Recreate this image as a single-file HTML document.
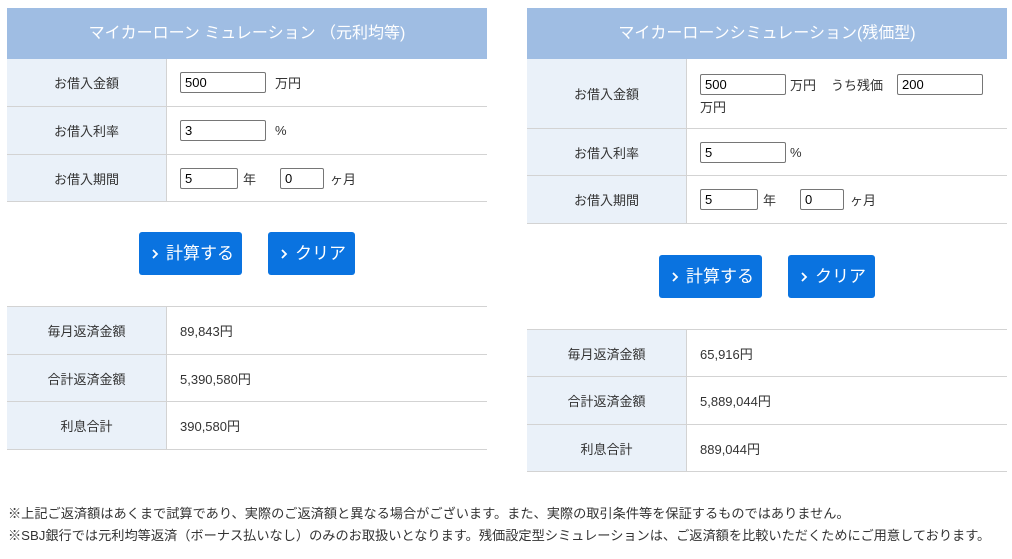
<!DOCTYPE html>
<html><head><meta charset="utf-8"><style>
*{box-sizing:border-box;margin:0;padding:0}
body{width:1012px;height:559px;background:#fff;font-family:"Liberation Sans","Noto Sans CJK JP",sans-serif;color:#333;font-size:13px;position:relative;overflow:hidden}
.p{position:absolute;width:480px}
.hd{height:51px;background:#9fbde3;color:#fff;font-size:16px;text-align:center;line-height:51px}
.row{display:flex;border-bottom:1px solid #d3d3d3}
.lb{width:160px;background:#eaf1f9;border-right:1px solid #d3d3d3;display:flex;align-items:center;justify-content:center}
.vl{flex:1;padding-left:13px;display:flex;align-items:center;flex-wrap:wrap}
.in{display:inline-block;height:21px;border:1px solid #767676;border-radius:2px;font-size:13px;color:#000;padding:2px 4px;line-height:15px}
.tp{border-top:1px solid #d3d3d3}
.btn{position:absolute;height:43px;background:#0a73e0;color:#fff;border-radius:3px;font-size:17px;line-height:43px;padding-left:12px}
.btn svg{margin-right:7px;vertical-align:middle;position:relative;top:-1px}
.fn{position:absolute;left:8px;font-size:13.2px;white-space:nowrap;color:#333}
</style></head><body>

<div class="p" style="left:7px;top:8px">
<div class="hd">マイカーローン ミュレーション （元利均等)</div>
<div class="row" style="height:48px"><div class="lb">お借入金額</div><div class="vl"><span class="in" style="width:86px">500</span><span style="margin-left:9px">万円</span></div></div>
<div class="row" style="height:48px"><div class="lb">お借入利率</div><div class="vl"><span class="in" style="width:86px">3</span><span style="margin-left:9px">%</span></div></div>
<div class="row" style="height:47px"><div class="lb">お借入期間</div><div class="vl"><span class="in" style="width:58px">5</span><span style="margin-left:5px">年</span><span class="in" style="width:44px;margin-left:24px">0</span><span style="margin-left:6px">ヶ月</span></div></div>
</div>
<div class="btn" style="left:139px;top:232px;width:103px"><svg width="8" height="12" viewBox="0 0 8 12"><path d="M2 2l4 4-4 4" fill="none" stroke="#fff" stroke-width="1.8"/></svg>計算する</div>
<div class="btn" style="left:268px;top:232px;width:87px"><svg width="8" height="12" viewBox="0 0 8 12"><path d="M2 2l4 4-4 4" fill="none" stroke="#fff" stroke-width="1.8"/></svg>クリア</div>
<div class="p tp" style="left:7px;top:306px">
<div class="row" style="height:48px"><div class="lb">毎月返済金額</div><div class="vl">89,843円</div></div>
<div class="row" style="height:47px"><div class="lb">合計返済金額</div><div class="vl">5,390,580円</div></div>
<div class="row" style="height:48px"><div class="lb">利息合計</div><div class="vl">390,580円</div></div>
</div>

<div class="p" style="left:527px;top:8px">
<div class="hd">マイカーローンシミュレーション(残価型)</div>
<div class="row" style="height:70px"><div class="lb">お借入金額</div><div class="vl" style="align-content:center;padding-top:2px"><span class="in" style="width:86px">500</span><span style="margin-left:4px">万円</span><span style="margin-left:15px">うち残価</span><span class="in" style="width:86px;margin-left:14px">200</span><div style="width:100%;margin-top:2px">万円</div></div></div>
<div class="row" style="height:47px"><div class="lb">お借入利率</div><div class="vl"><span class="in" style="width:86px">5</span><span style="margin-left:4px">%</span></div></div>
<div class="row" style="height:48px"><div class="lb">お借入期間</div><div class="vl"><span class="in" style="width:58px">5</span><span style="margin-left:5px">年</span><span class="in" style="width:44px;margin-left:24px">0</span><span style="margin-left:6px">ヶ月</span></div></div>
</div>
<div class="btn" style="left:659px;top:255px;width:103px"><svg width="8" height="12" viewBox="0 0 8 12"><path d="M2 2l4 4-4 4" fill="none" stroke="#fff" stroke-width="1.8"/></svg>計算する</div>
<div class="btn" style="left:788px;top:255px;width:87px"><svg width="8" height="12" viewBox="0 0 8 12"><path d="M2 2l4 4-4 4" fill="none" stroke="#fff" stroke-width="1.8"/></svg>クリア</div>
<div class="p tp" style="left:527px;top:329px">
<div class="row" style="height:47px"><div class="lb">毎月返済金額</div><div class="vl">65,916円</div></div>
<div class="row" style="height:48px"><div class="lb">合計返済金額</div><div class="vl">5,889,044円</div></div>
<div class="row" style="height:47px"><div class="lb">利息合計</div><div class="vl">889,044円</div></div>
</div>

<div class="fn" style="top:503px">※上記ご返済額はあくまで試算であり、実際のご返済額と異なる場合がございます。また、実際の取引条件等を保証するものではありません。</div>
<div class="fn" style="top:525px">※SBJ銀行では元利均等返済（ボーナス払いなし）のみのお取扱いとなります。残価設定型シミュレーションは、ご返済額を比較いただくためにご用意しております。</div>
</body></html>
